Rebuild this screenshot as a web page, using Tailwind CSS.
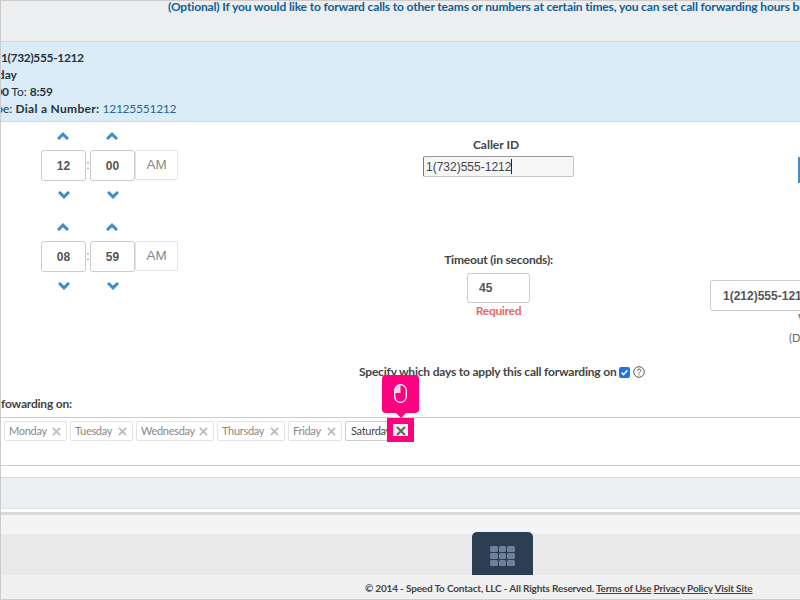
<!DOCTYPE html>
<html lang="en">
<head>
  <meta charset="UTF-8">
  <title>Call Forwarding</title>
  <script src="https://cdn.jsdelivr.net/npm/@tailwindcss/browser@4"></script>
</head>
<body class="w-[800px] h-[600px] overflow-hidden font-['Lato',sans-serif] text-[#333] bg-white">
<div class="relative w-[800px] h-[600px] overflow-hidden border-l border-[#ccc] flex flex-col">

  <!-- top note -->
  <div class="h-[41px] shrink-0 bg-[#eceef0] border-t border-[#ccc] pl-[167px] whitespace-nowrap text-[12px] leading-[12px] font-bold text-[#0f5f98] tracking-[-0.14px]">
    (Optional) If you would like to forward calls to other teams or numbers at certain times, you can set call forwarding hours below.
  </div>

  <!-- summary -->
  <div class="h-[81px] shrink-0 bg-[#d9ecf7] border-y border-[#bfe0ee] pt-[7px] text-[12px] leading-[17px] text-[#29333d] whitespace-nowrap">
    <div class="font-bold tracking-[-0.35px]">1(732)555-1212</div>
    <div class="font-bold -ml-[28px]">Monday</div>
    <div class="-ml-[55px]">From: <b class="tracking-[-0.3px]">12:00</b> To: <b class="tracking-[-0.3px]">8:59</b></div>
    <div class="-ml-[17px]">Type: <b class="tracking-[0.3px]">Dial a Number:</b> <span class="text-[#2a6496] tracking-[-0.25px]">12125551212</span></div>
  </div>

  <!-- form -->
  <div class="h-[356px] shrink-0 border-b border-[#c9e0e6] flex flex-col">
    <div class="flex h-[240px] shrink-0">
      <!-- time pickers -->
      <div class="w-[422px] shrink-0 pl-[40px] flex flex-col gap-[4px]">
        <div class="flex flex-col">
          <div class="flex h-[28px] items-center">
            <div class="w-[44px] flex justify-center"><svg width="12" height="8" viewBox="0 0 12 8" fill="none" stroke="#428bca" stroke-width="3"><path d="M1 7 6 2.200 11 7"/></svg></div>
            <div class="w-[44px] ml-[5px] flex justify-center"><svg width="12" height="8" viewBox="0 0 12 8" fill="none" stroke="#428bca" stroke-width="3"><path d="M1 7 6 2.200 11 7"/></svg></div>
          </div>
          <div class="flex items-start h-[31px] font-['Liberation_Sans',sans-serif]">
            <div class="w-[45px] h-[31px] border border-[#ccc] rounded-[3px] flex items-center justify-center text-[12px] font-bold text-[#555]">12</div>
            <div class="w-[4px] text-center text-[12px] leading-[31px] text-[#777]">:</div>
            <div class="w-[45px] h-[31px] border border-[#ccc] rounded-[3px] flex items-center justify-center text-[12px] font-bold text-[#555]">00</div>
            <div class="w-[43px] h-[30px] border border-[#e5e5e5] rounded-[2px] flex items-center justify-center text-[13.500px] text-[#888]">AM</div>
          </div>
          <div class="flex h-[28px] items-center">
            <div class="w-[46px] flex justify-center"><svg width="12" height="8" viewBox="0 0 12 8" fill="none" stroke="#428bca" stroke-width="3"><path d="M1 1 6 5.800 11 1"/></svg></div>
            <div class="w-[46px] ml-[3px] flex justify-center"><svg width="12" height="8" viewBox="0 0 12 8" fill="none" stroke="#428bca" stroke-width="3"><path d="M1 1 6 5.800 11 1"/></svg></div>
          </div>
        </div>
        <div class="flex flex-col">
          <div class="flex h-[28px] items-center">
            <div class="w-[44px] flex justify-center"><svg width="12" height="8" viewBox="0 0 12 8" fill="none" stroke="#428bca" stroke-width="3"><path d="M1 7 6 2.200 11 7"/></svg></div>
            <div class="w-[44px] ml-[5px] flex justify-center"><svg width="12" height="8" viewBox="0 0 12 8" fill="none" stroke="#428bca" stroke-width="3"><path d="M1 7 6 2.200 11 7"/></svg></div>
          </div>
          <div class="flex items-start h-[31px] font-['Liberation_Sans',sans-serif]">
            <div class="w-[45px] h-[31px] border border-[#ccc] rounded-[3px] flex items-center justify-center text-[12px] font-bold text-[#555]">08</div>
            <div class="w-[4px] text-center text-[12px] leading-[31px] text-[#777]">:</div>
            <div class="w-[45px] h-[31px] border border-[#ccc] rounded-[3px] flex items-center justify-center text-[12px] font-bold text-[#555]">59</div>
            <div class="w-[43px] h-[30px] border border-[#e5e5e5] rounded-[2px] flex items-center justify-center text-[13.500px] text-[#888]">AM</div>
          </div>
          <div class="flex h-[28px] items-center">
            <div class="w-[46px] flex justify-center"><svg width="12" height="8" viewBox="0 0 12 8" fill="none" stroke="#428bca" stroke-width="3"><path d="M1 1 6 5.800 11 1"/></svg></div>
            <div class="w-[46px] ml-[3px] flex justify-center"><svg width="12" height="8" viewBox="0 0 12 8" fill="none" stroke="#428bca" stroke-width="3"><path d="M1 1 6 5.800 11 1"/></svg></div>
          </div>
        </div>
      </div>

      <!-- caller id / timeout -->
      <div class="w-[151px] shrink-0 flex flex-col">
        <div class="mt-[15px] h-[16px] text-center text-[12px] leading-[16px] font-bold text-[#444] pr-[5px]">Caller ID</div>
        <div class="mt-[3px] h-[21px] w-[151px] bg-[#f6f6f6] border border-[#c6c6c6] border-l-[#777] border-t-[#999] rounded-[2px] pl-[2px] flex items-center font-['Liberation_Sans',sans-serif] text-[12px] text-[#444]">1(732)555-1212<span class="w-px h-[15px] bg-[#222]"></span></div>
        <div class="mt-[75px] h-[16px] whitespace-nowrap flex justify-center text-[12px] leading-[16px] font-bold text-[#444] tracking-[-0.2px]">Timeout (in seconds):</div>
        <div class="mt-[5px] ml-[44px] w-[63px] h-[30px] border border-[#ccc] rounded-[3px] pl-[11px] flex items-center font-['Liberation_Sans',sans-serif] text-[12px] font-bold text-[#555]">45</div>
        <div class="text-center text-[12px] leading-[16px] font-bold text-[#e8696a] tracking-[-0.3px]">Required</div>
      </div>

      <!-- forward number, cut off by the window -->
      <div class="ml-[136px] w-[200px] shrink-0 flex flex-col">
        <div class="mt-[35px] ml-[88px] w-[4px] h-[26px] bg-[#428bca]"></div>
        <div class="mt-[97px] w-[200px] h-[31px] border border-[#ccc] rounded-[3px] pl-[12px] flex items-center font-['Liberation_Sans',sans-serif] text-[12px] font-bold text-[#555]">1(212)555-1212</div>
        <div class="-mt-[1px] ml-[88px] text-[12px] leading-[16px] text-[#666]">Works</div>
        <div class="mt-[4px] ml-[79px] text-[11px] leading-[16px] text-[#666] whitespace-nowrap">(Dial)</div>
      </div>
    </div>

    <div class="h-[20px] pl-[358px] flex items-center whitespace-nowrap text-[12px] font-bold text-[#444] tracking-[-0.2px]">
      Specify which days to apply this call forwarding on
      <span class="ml-[3px] w-[11px] h-[11px] rounded-[2px] bg-[#1a73e8] flex items-center justify-center"><svg width="9" height="9" viewBox="0 0 10 10" fill="none" stroke="#fff" stroke-width="1.800"><path d="M1.800 5.200 4 7.400l4.200-5"/></svg></span>
      <svg class="ml-[3px]" width="12" height="12" viewBox="0 0 12 12" fill="none" stroke="#444"><circle cx="6" cy="6" r="5.300" stroke-width="0.900"/><path d="M4.300 4.800c0-2.200 3.400-2.200 3.400-.2 0 1.300-1.700 1.300-1.700 2.800" stroke-width="0.900"/><path d="M6 8.300v1" stroke-width="1"/></svg>
    </div>

    <div class="mt-[15px] h-[14px] text-[12px] leading-[14px] font-bold text-[#444] whitespace-nowrap tracking-[-0.2px]">fowarding on:</div>

    <div class="mt-[6px] h-[49px] border-y border-[#ccc] pt-[3px] pl-[3px] flex gap-[3px] items-start text-[11px] tracking-[-0.3px] text-[#888]">
      <div class="h-[20px] w-[63px] border border-[#e3e3e3] rounded-[2px] pl-[4px] pr-[5px] flex items-center justify-between">Monday <svg width="9" height="9" viewBox="0 0 10 10" stroke="#bbb" stroke-width="2"><path d="M1 1l8 8M9 1l-8 8"/></svg></div>
      <div class="h-[20px] w-[63px] border border-[#e3e3e3] rounded-[2px] pl-[4px] pr-[5px] flex items-center justify-between">Tuesday <svg width="9" height="9" viewBox="0 0 10 10" stroke="#bbb" stroke-width="2"><path d="M1 1l8 8M9 1l-8 8"/></svg></div>
      <div class="h-[20px] w-[78px] border border-[#e3e3e3] rounded-[2px] pl-[4px] pr-[5px] flex items-center justify-between">Wednesday <svg width="9" height="9" viewBox="0 0 10 10" stroke="#bbb" stroke-width="2"><path d="M1 1l8 8M9 1l-8 8"/></svg></div>
      <div class="h-[20px] w-[68px] border border-[#e3e3e3] rounded-[2px] pl-[4px] pr-[5px] flex items-center justify-between">Thursday <svg width="9" height="9" viewBox="0 0 10 10" stroke="#bbb" stroke-width="2"><path d="M1 1l8 8M9 1l-8 8"/></svg></div>
      <div class="h-[20px] w-[54px] border border-[#e3e3e3] rounded-[2px] pl-[4px] pr-[5px] flex items-center justify-between">Friday <svg width="9" height="9" viewBox="0 0 10 10" stroke="#bbb" stroke-width="2"><path d="M1 1l8 8M9 1l-8 8"/></svg></div>
      <div class="h-[20px] w-[60px] border border-[#ccc] rounded-[2px] pl-[5px] flex items-center text-[#444] overflow-hidden whitespace-nowrap">Saturday</div>
    </div>
  </div>

  <!-- lower bands -->
  <div class="h-[31px] shrink-0 bg-[#eceef0] border-b border-[#dde0e6]"></div>
  <div class="h-[3px] shrink-0 bg-white"></div>
  <div class="h-[3px] shrink-0 bg-[#d8d8d8]"></div>
  <div class="h-[19px] shrink-0 bg-[#f3f4f6]"></div>
  <div class="h-[41px] shrink-0 bg-[#e9e9e9] pl-[471px]">
    <div class="w-[61px] h-[43px] -mt-[2px] bg-[#2b3e52] rounded-t-[5px] flex items-center justify-center pt-[4px]">
      <div class="grid grid-cols-3 gap-[1px] w-[25px]">
        <div class="h-[6px] rounded-[1.5px] bg-[#6d829a]"></div><div class="h-[6px] rounded-[1.5px] bg-[#6d829a]"></div><div class="h-[6px] rounded-[1.5px] bg-[#6d829a]"></div>
        <div class="h-[6px] rounded-[1.5px] bg-[#6d829a]"></div><div class="h-[6px] rounded-[1.5px] bg-[#6d829a]"></div><div class="h-[6px] rounded-[1.5px] bg-[#6d829a]"></div>
        <div class="h-[6px] rounded-[1.5px] bg-[#6d829a]"></div><div class="h-[6px] rounded-[1.5px] bg-[#6d829a]"></div><div class="h-[6px] rounded-[1.5px] bg-[#6d829a]"></div>
      </div>
    </div>
  </div>
  <div class="flex-1 bg-[#f0f0f0] border-b border-[#ccc] pl-[364px] pt-[6px] text-[10px] leading-[14px] font-bold text-[#444] whitespace-nowrap tracking-[-0.17px]">
    © 2014 - Speed To Contact, LLC - All Rights Reserved. <span class="underline">Terms of Use</span> <span class="underline">Privacy Policy</span> <span class="underline">Visit Site</span>
  </div>

  <!-- walkthrough highlight over the remove button -->
  <div class="absolute left-[386px] top-[418px] w-[27px] h-[24px] border-[6px] border-[#ff0080] bg-[#eee] flex items-center justify-center pt-[1px]">
    <svg width="10" height="10" viewBox="0 0 10 10" stroke="#666" stroke-width="2"><path d="M1 1l8 8M9 1l-8 8"/></svg>
  </div>
  <div class="absolute left-[381px] top-[375px] w-[37px] h-[38px] bg-[#ff0080] rounded-[4px] flex items-center justify-center pb-[2px]">
    <svg width="13" height="19" viewBox="0 0 13 19" fill="none" stroke="#fff" stroke-width="1.300"><path d="M6.500 1A5.500 5.500 0 0 0 1 6.500V9h5.500z" fill="#fff" fill-opacity="0.8" stroke="none"/><rect x="0.700" y="0.700" width="11.600" height="17.600" rx="5.800"/></svg>
  </div>
  <div class="absolute left-[394px] top-[412px] w-0 h-0 border-x-[6px] border-x-transparent border-t-[6px] border-t-[#ff0080]"></div>
</div>
</body>
</html>
